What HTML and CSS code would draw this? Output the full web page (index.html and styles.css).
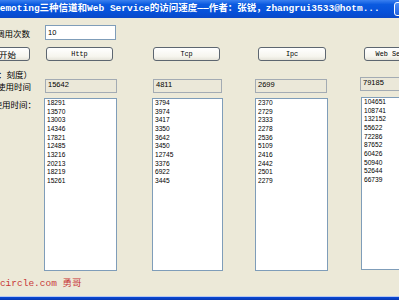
FILE: index.html
```html
<!DOCTYPE html>
<html>
<head>
<meta charset="utf-8">
<link rel="stylesheet" href="styles.css">
</head>
<body>
<div class="window">
  <div class="titlebar">
    <div class="title">Remoting三种信道和Web Service的访问速度——作者：张锐，zhangrui3533@hotm...</div>
    <div class="tbtn"></div>
  </div>
  <div class="client">
    <div class="row r1">
      <div class="label lab-count">调用次数</div>
      <div class="input c1">10</div>
    </div>
    <div class="row r2">
      <div class="btn start">开始</div>
      <div class="btn b1">Http</div>
      <div class="btn b2">Tcp</div>
      <div class="btn b3">Ipc</div>
      <div class="btn b4">Web Service</div>
    </div>
    <div class="row r3">
      <div class="label lab-unit">（单位：刻度）</div>
    </div>
    <div class="row r4">
      <div class="label lab-avg">平均使用时间</div>
      <div class="ro o1">15642</div>
      <div class="ro o2">4811</div>
      <div class="ro o3">2699</div>
      <div class="ro o4">79185</div>
    </div>
    <div class="row r5">
      <div class="label lab-each">各次使用时间：</div>
      <div class="list l1">18291<br>13570<br>13003<br>14346<br>17821<br>12485<br>13216<br>20213<br>18219<br>15261</div>
      <div class="list l2">3794<br>3974<br>3417<br>3350<br>3642<br>3450<br>12745<br>3376<br>6922<br>3445</div>
      <div class="list l3">2370<br>2729<br>2333<br>2278<br>2536<br>5109<br>2416<br>2442<br>2501<br>2279</div>
      <div class="list l4">104651<br>108741<br>132152<br>55622<br>72286<br>87652<br>60426<br>50940<br>52644<br>66739</div>
    </div>
    <div class="footer">itcircle.com 勇哥</div>
  </div>
  <div class="bottom"></div>
</div>
</body>
</html>
```
FILE: styles.css
```css
html, body {
  margin: 0;
  padding: 0;
}
body {
  width: 399px;
  height: 300px;
  overflow: hidden;
  background: #ece9d8;
}
.window {
  width: 399px;
  height: 300px;
  display: flex;
  flex-direction: column;
  overflow: hidden;
}
.titlebar {
  height: 18px;
  flex: none;
  display: flex;
  align-items: center;
  background: linear-gradient(#3a80f0 0%, #0b5ae0 25%, #0650d8 70%, #0a48c8 100%);
}
.title {
  flex: 1;
  white-space: nowrap;
  overflow: hidden;
  color: #fff;
  font-family: "Liberation Mono", "Noto Sans CJK SC", monospace;
  font-weight: bold;
  font-size: 9.5px;
  line-height: 18px;
  text-indent: -6px;
}
.tbtn {
  flex: none;
  width: 14px;
  height: 14px;
  margin-right: -9px;
  margin-left: 1px;
  box-sizing: border-box;
  border: 1px solid #fff;
  border-radius: 3px;
  background: linear-gradient(#4d8ff8, #1e60e0);
}
.client {
  flex: none;
  display: flex;
  flex-direction: column;
}
.row {
  display: grid;
  grid-template-columns: 44px 108px 103px 105px 1fr;
}
.label {
  grid-column: 1;
  display: flex;
  justify-content: flex-end;
  white-space: nowrap;
  font-family: "Noto Sans CJK SC", sans-serif;
  font-size: 8.5px;
  line-height: 10px;
  color: #000;
}
.r1 { margin-top: 7px; height: 15px; align-items: center; }
.lab-count { padding-right: 14px; }
.input {
  box-sizing: border-box;
  height: 15px;
  width: 71px;
  margin-left: 1px;
  background: #fff;
  border: 1px solid #7f9db9;
  font-family: "Liberation Sans", sans-serif;
  font-size: 7.5px;
  line-height: 13px;
  padding-left: 2px;
}
.r2 { margin-top: 7px; height: 14px; }
.btn {
  box-sizing: border-box;
  height: 14px;
  width: 67px;
  border: 1px solid #5d6670;
  border-radius: 3px;
  background: linear-gradient(#ffffff, #f6f5ee 70%, #e6e4da);
  font-family: "Liberation Mono", monospace;
  font-size: 6.8px;
  line-height: 12px;
  text-align: center;
  white-space: nowrap;
  overflow: hidden;
  color: #000;
}
.btn.start {
  width: 45px;
  margin-left: -15px;
  font-family: "Noto Sans CJK SC", sans-serif;
  font-size: 8.5px;
}
.b1 { margin-left: 2px; }
.b2 { margin-left: 1px; }
.b3 { margin-left: 3px; width: 68px; }
.b4 { margin-left: 4px; width: 68px; }
.r3 { margin-top: 9px; height: 9px; }
.lab-unit { padding-right: 12px; line-height: 9px; }
.r4 { height: 14px; align-items: center; }
.lab-avg { padding-right: 13px; }
.ro {
  box-sizing: border-box;
  height: 14px;
  align-self: start;
  background: #ebe8d9;
  border: 1px solid #a3abb3;
  font-family: "Liberation Sans", sans-serif;
  font-size: 7.5px;
  line-height: 10px;
  padding: 0 0 0 2px;
}
.o1 { width: 72px; margin-left: 1px; }
.o2 { width: 69px; margin-left: 1px; }
.o3 { width: 72px; }
.o4 { width: 73px; margin-top: -2px; }
.r5 { margin-top: 5px; height: 173px; }
.lab-each { padding-right: 8px; align-self: start; margin-top: 1px; }
.list {
  box-sizing: border-box;
  height: 173px;
  background: #fff;
  border: 1px solid #7f9db9;
  font-family: "Liberation Sans", sans-serif;
  font-size: 6.6px;
  line-height: 8.67px;
  padding: 0 0 0 2px;
  color: #000;
}
.l1 { width: 73px; }
.l2 { width: 71px; }
.l3 { width: 73px; }
.l4 { width: 73px; margin-left: 1px; margin-top: -1px; }
.footer {
  margin-top: 8px;
  height: 10px;
  white-space: nowrap;
  font-family: "Liberation Mono", "Noto Sans CJK SC", monospace;
  font-size: 9.5px;
  line-height: 10px;
  color: #c83838;
  text-indent: -11.5px;
}
.bottom {
  margin-top: auto;
  height: 4px;
  flex: none;
  border-top: 1px solid #b8c8f0;
  background: linear-gradient(#0a4ad8, #0838b0);
  box-sizing: border-box;
}
```
